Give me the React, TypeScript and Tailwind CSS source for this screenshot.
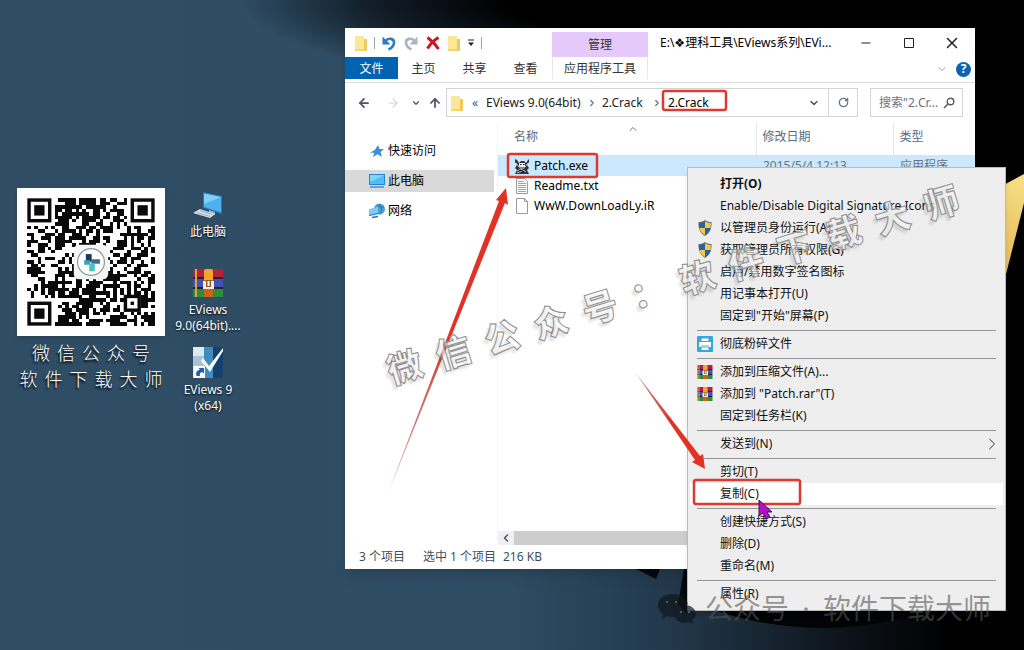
import { Fragment } from 'react';
import type { ReactNode } from 'react';
import {
    ArrowLeft,
    ArrowRight,
    ArrowUp,
    ChevronDown,
    ChevronLeft,
    ChevronRight,
    ChevronUp,
    Minus,
    RotateCw,
    Square,
    X,
} from 'lucide-react';

/* ---------- icons ---------- */

function FolderIcon() {
    return (
        <svg viewBox="0 0 14 18" className="w-[14px] h-[18px] shrink-0" aria-hidden="true">
            <path d="M1 2h9v3h3v12H1z" fill="#f5d571" />
            <path d="M1 2h9v13H1z" fill="#fce697" />
            <path d="M10 5h3v12h-3z" fill="#eec95c" />
        </svg>
    );
}

function UndoIcon({ color, flip }: { color: string; flip?: boolean }) {
    return (
        <svg viewBox="0 0 16 16" className={flip ? 'w-4 h-4 -scale-x-100' : 'w-4 h-4'} aria-hidden="true">
            <path d="M4 6.500C7.500 2 13.500 3.500 13 8c-.4 2.800-2.300 5-5.500 6.500" fill="none" stroke={color} strokeWidth="2.600" />
            <path d="M1.500 1.500v8h8z" fill={color} />
        </svg>
    );
}

function DeleteIcon() {
    return (
        <svg viewBox="0 0 16 16" className="w-4 h-4" aria-hidden="true">
            <path d="M2.500 2.500C6 5 11 10 13.500 14M13.500 2.500C9 5 5 9.500 2.500 13.500" fill="none" stroke="#c8141e" strokeWidth="3" />
        </svg>
    );
}

function MagnifierIcon() {
    return (
        <svg viewBox="0 0 12 12" className="w-3 h-3 shrink-0" aria-hidden="true">
            <circle cx="7.500" cy="4.500" r="3.300" fill="none" stroke="#5c5c5c" strokeWidth="1.400" />
            <path d="M5 7L1 11" stroke="#5c5c5c" strokeWidth="1.600" />
        </svg>
    );
}

function MonitorIcon({ className }: { className: string }) {
    return (
        <svg viewBox="0 0 16 16" className={className} aria-hidden="true">
            <path d="M0 1h16v11H0z" fill="#1f86d1" />
            <path d="M1 2h14v9H1z" fill="#55bdf5" />
            <path d="M1 2h14L1 9z" fill="#84d4fb" />
            <path d="M1 14h14" stroke="#3f89bb" strokeWidth="1.400" />
        </svg>
    );
}

function StarIcon() {
    return (
        <svg viewBox="0 0 16 16" className="w-4 h-4 shrink-0" aria-hidden="true">
            <path d="M9 2l1.500 4H15l-3.500 3 1.500 5-4.500-2.800L4 14l1.300-4.300H1l5-3z" fill="#3a8fd6" />
        </svg>
    );
}

function NetworkIcon() {
    return (
        <svg viewBox="0 0 16 16" className="w-4 h-4 shrink-0" aria-hidden="true">
            <circle cx="10.500" cy="6" r="5.500" fill="#4aa0d8" />
            <path d="M8 2c2 2 4 2 7 2M10 1c3 3 3 7 1 10" fill="none" stroke="#246fa8" strokeWidth=".8" />
            <path d="M0 6l9-2v7l-9 2z" fill="#7ccdf5" />
            <path d="M0 13l9-2v-1l-9 2z" fill="#2575b5" />
            <path d="M3 14.500l6-1" stroke="#2575b5" strokeWidth="1.500" />
        </svg>
    );
}

function PatchIcon() {
    return (
        <svg viewBox="0 0 16 16" className="w-4 h-4 shrink-0" aria-hidden="true">
            <path d="M1 1l2 1 2 3 2-2h3l2 2 2-3 1-1v3l-2 3 2 3-2 2 2 4H1l2-4-2-2 2-3-2-3z" fill="#2d3439" />
            <path d="M5 5h6v3l-1 3H6L5 8z" fill="#e9eef2" />
            <path d="M6 6.500h1.500M9 6.500h1.500M7 9v2M9 9v2" stroke="#222" strokeWidth="1" />
            <path d="M2 5l3 4M14 5l-3 4M3 13l4-2 5 3M3 15l5-2" stroke="#dfe9f2" strokeWidth=".8" />
        </svg>
    );
}

function PageIcon({ lines }: { lines?: boolean }) {
    return (
        <svg viewBox="0 0 16 16" className="w-4 h-4 shrink-0" aria-hidden="true">
            <path d="M2.500.5h8l3 3v12h-11z" fill="#fff" stroke="#9a9a9a" />
            {lines ? (
                <path d="M4 3.500h6M4 5.500h8M4 7.500h8M4 9.500h8M4 11.500h8M4 13.500h8" stroke="#a0a0a0" />
            ) : (
                <path d="M10.500.5v3h3" fill="none" stroke="#9a9a9a" />
            )}
        </svg>
    );
}

function ShieldIcon() {
    return (
        <svg viewBox="0 0 16 16" className="w-4 h-4" aria-hidden="true">
            <path d="M8 0c2 1.500 4 2 6.500 2 .3 6-1 10.500-6.500 14C2.500 12.500 1.200 8 1.500 2 4 2 6 1.500 8 0z" fill="#667078" />
            <path d="M8 1.200V8H2.400C2.200 6.500 2.200 5 2.300 3 4.500 2.900 6.200 2.400 8 1.200z" fill="#2762a8" />
            <path d="M8 1.200V8h5.600c.2-1.500.2-3 .1-5-2.200-.1-3.900-.6-5.700-1.800z" fill="#f5c845" />
            <path d="M8 8H2.400C3 11 4.800 13.200 8 15z" fill="#f5c845" />
            <path d="M8 8h5.600C13 11 11.200 13.200 8 15z" fill="#2762a8" />
        </svg>
    );
}

function ShredIcon() {
    return (
        <svg viewBox="0 0 16 16" className="w-4 h-4" aria-hidden="true">
            <rect width="16" height="16" rx="1" fill="#35a7da" />
            <path d="M4.500 2.500h7V5h-7zM2 6h12v5H2zM4.500 11.500h7V14h-7z" fill="#fff" />
            <path d="M4 10h8" stroke="#35a7da" />
        </svg>
    );
}

function RarIcon({ className }: { className: string }) {
    return (
        <svg viewBox="0 0 32 30" className={className} aria-hidden="true">
            <path d="M1 1h30v8H1z" fill="#b5203a" />
            <path d="M1 11h30v8H1z" fill="#4053b5" />
            <path d="M1 21h30v8H1z" fill="#2b8e3c" />
            <path d="M1 9h30v2H1zM1 19h30v2H1z" fill="#27212f" />
            <path d="M3 1h2v28H3z" fill="#d9a441" />
            <path d="M12 1h9v28h-9z" fill="#c9641d" />
            <path d="M12 3l2-2h5l2 2v9h-9z" fill="#f4a52f" />
            <path d="M11 13h11v8H11z" fill="#f3ead8" />
            <path d="M14 12h5v7h-5z" fill="#8f5a27" />
            <path d="M15.500 13h2v5h-2z" fill="#fff" />
        </svg>
    );
}

function PcIcon() {
    return (
        <svg viewBox="0 0 32 30" className="w-8 h-[30px]" aria-hidden="true">
            <path d="M11 2l19 4v18l-19-6z" fill="#1e7cc4" />
            <path d="M12 3.500l17 3.600v15.400l-17-5.500z" fill="#4cb2f0" />
            <path d="M12 3.500l17 3.600L12 14z" fill="#7fcff8" />
            <path d="M17 20l6 2v3l-6-2z" fill="#9fb4c2" />
            <path d="M1 23l7-4 15 5-5 4z" fill="#d9e2e8" />
            <path d="M5 22.500l13 4M8 20.500l12 4" stroke="#8b9ba8" strokeWidth=".8" />
        </svg>
    );
}

function EviewsIcon() {
    return (
        <svg viewBox="0 0 32 32" className="w-8 h-8" aria-hidden="true">
            <path d="M1 1h11v31H1z" fill="#dfe8ef" />
            <path d="M1 10h11v10H1z" fill="#a9c4d8" />
            <path d="M12 1h9v31h-9z" fill="#3f8cc0" />
            <path d="M21 1h10v31H21z" fill="#16406f" />
            <path d="M11 12l6 8L31 2v3L18 26l-9-11z" fill="#fff" />
            <path d="M2 20h11v12H2z" fill="#fff" />
            <path d="M4.500 30c-1-4 .5-6 3.500-6l-1.500-2H12v5.500L10 26c-2 .500-2.500 2-2 4z" fill="#1f5fae" />
        </svg>
    );
}

/* ---------- QR code ---------- */

const QR_SIZE = 37;

function inFinder(x: number, y: number) {
    return (x < 8 && y < 8) || (x > 28 && y < 8) || (x < 8 && y > 28);
}

function qrPath() {
    let seed = 77231;
    let d = '';
    for (let y = 0; y < QR_SIZE; y++) {
        for (let x = 0; x < QR_SIZE; x++) {
            seed = (seed * 16807) % 2147483647;
            const dense = (x > 8 && x < 20 && y < 14) || (y > 22 && x > 9 && x < 18);
            const on = seed / 2147483647 < (dense ? 0.68 : 0.52);
            const inAlign = x > 27 && x < 33 && y > 27 && y < 33;
            const inLogo = x > 13 && x < 23 && y > 13 && y < 23;
            if (on && !inFinder(x, y) && !inAlign && !inLogo) {
                d += `M${x} ${y}h1v1h-1z`;
            }
        }
    }
    return d;
}

function QrCode() {
    const finders = [[0, 0], [30, 0], [0, 30]];
    return (
        <svg viewBox="-3 -3 43 43" role="img" aria-label="QR" className="w-[148px] h-[148px] bg-white shadow-md">
            <path d={qrPath()} fill="#0a0a0a" shapeRendering="crispEdges" />
            {finders.map(([x, y]) => (
                <g key={`${x}-${y}`}>
                    <rect x={x + 0.5} y={y + 0.5} width="6" height="6" fill="#fff" stroke="#0a0a0a" />
                    <rect x={x + 2} y={y + 2} width="3" height="3" fill="#0a0a0a" />
                </g>
            ))}
            <rect x="28.500" y="28.500" width="4" height="4" fill="#fff" stroke="#0a0a0a" />
            <rect x="30" y="30" width="1" height="1" fill="#0a0a0a" />
            <rect x="13.500" y="13.500" width="10" height="10" rx="1.500" fill="#f4f5f5" />
            <circle cx="18.500" cy="18.500" r="3.900" fill="#fff" stroke="#8d9a9e" strokeWidth=".35" />
            <path d="M17 16.200h1.700v2.300H17z" fill="#153d5c" />
            <path d="M16.500 18h1.800v1.300h-1.800z" fill="#3ba3b5" />
            <path d="M18.600 17.700h2.500v1.300h-2.500z" fill="#3c6f8d" />
            <path d="M18 19h1.600v2.200H18z" fill="#48c2c0" />
        </svg>
    );
}

/* ---------- desktop ---------- */

function Wallpaper() {
    return (
        <svg
            viewBox="0 0 1024 650"
            preserveAspectRatio="none"
            aria-hidden="true"
            className="absolute inset-0 w-full h-full"
        >
            <defs>
                <linearGradient id="base" x1="0" y1="0" x2="1" y2="0">
                    <stop offset="0" stopColor="#2f4d65" />
                    <stop offset=".5" stopColor="#2e4c63" />
                    <stop offset=".66" stopColor="#22384a" />
                    <stop offset=".83" stopColor="#0c1219" />
                    <stop offset=".93" stopColor="#000" />
                </linearGradient>
                <radialGradient id="top" gradientUnits="userSpaceOnUse" cx="0" cy="0" r="1" gradientTransform="translate(680 0) scale(440 90)">
                    <stop offset=".4" stopColor="#000" />
                    <stop offset=".7" stopColor="#0b1119" stopOpacity=".8" />
                    <stop offset="1" stopColor="#0b1119" stopOpacity="0" />
                </radialGradient>
                <linearGradient id="moon" x1="0" y1="0" x2="0" y2="1">
                    <stop offset="0" stopColor="#f7e084" />
                    <stop offset="1" stopColor="#e0ae50" />
                </linearGradient>
            </defs>
            <path d="M0 0h1024v650H0z" fill="url(#base)" />
            <path d="M0 0h700v200H0z" fill="url(#top)" />
            <path d="M640 0h384v400H640z" fill="#000" />
            <path d="M636 569h24l-4 10zM684 569h3v45l-9-10z" fill="#05080c" />
            <path d="M690 600h260c-60 32-170 42-260 0z" fill="#020304" />
            <path d="M1000 187l24-13v29l-24 95z" fill="url(#moon)" />
        </svg>
    );
}

function DesktopIcon({ icon, lines }: { icon: ReactNode; lines: string[] }) {
    return (
        <button
            type="button"
            className="flex w-20 flex-col items-center text-xs leading-4 text-white [text-shadow:0_1px_2px_#000]"
        >
            {icon}
            <span className="mt-1">
                {lines.map((line) => (
                    <span key={line} className="block">{line}</span>
                ))}
            </span>
        </button>
    );
}

function CaptionLine({ text }: { text: string }) {
    return (
        <p className="flex justify-center gap-[7px]">
            {text.split('').map((ch) => (
                <span key={ch}>{ch}</span>
            ))}
        </p>
    );
}

/* ---------- explorer window ---------- */

function ExplorerHeader() {
    return (
        <header className="flex h-[55px] border-b border-[#dadbdc] text-[#333]">
            <div className="flex w-[207px] flex-col">
                <div className="flex h-[29px] items-center gap-[6px] pl-[9px]">
                    <FolderIcon />
                    <span className="h-3 w-px bg-gray-400" />
                    <button type="button" aria-label="撤消"><UndoIcon color="#2d7dc4" /></button>
                    <button type="button" aria-label="恢复"><UndoIcon color="#a9b4bf" flip /></button>
                    <button type="button" aria-label="删除"><DeleteIcon /></button>
                    <FolderIcon />
                    <svg viewBox="0 0 8 8" className="w-2 h-2" aria-hidden="true">
                        <path d="M1 1h6" stroke="#222" />
                        <path d="M1 3.500h6L4 7z" fill="#222" />
                    </svg>
                    <span className="h-3 w-px bg-gray-400" />
                </div>
                <div className="flex h-[22px]">
                    <button type="button" className="w-[53px] bg-[#0063b1] pt-[2px] text-white">文件</button>
                    <button type="button" className="w-[51px] pt-[2px]">主页</button>
                    <button type="button" className="w-[51px] pt-[2px]">共享</button>
                    <button type="button" className="w-[51px] pt-[2px]">查看</button>
                </div>
            </div>
            <div className="flex w-24 flex-col pt-1">
                <div className="flex h-[25px] items-center justify-center bg-[#e6c9fb]">管理</div>
                <button type="button" className="h-[22px] border-x border-gray-200 pt-[2px]">应用程序工具</button>
            </div>
            <div className="flex flex-1 flex-col">
                <div className="flex h-[29px] items-center justify-between pl-3 pr-[2px]">
                    <h1 className="text-black">
                        E:\<span className="font-['DejaVu_Sans']">❖</span>理科工具\EViews系列\EVi...
                    </h1>
                    <div className="flex items-center text-[#222]">
                        <button type="button" aria-label="最小化" className="flex w-[43px] justify-center">
                            <Minus size={14} strokeWidth={2} />
                        </button>
                        <button type="button" aria-label="最大化" className="flex w-[43px] justify-center">
                            <svg viewBox="0 0 10 10" className="w-[10px] h-[10px]" aria-hidden="true">
                                <path d="M.5.5h9v9h-9z" fill="none" stroke="currentColor" />
                            </svg>
                        </button>
                        <button type="button" aria-label="关闭" className="flex w-[43px] justify-center">
                            <X size={18} strokeWidth={2} />
                        </button>
                    </div>
                </div>
                <div className="flex h-6 items-center justify-end gap-2 pr-1">
                    <ChevronDown size={12} className="text-gray-400" />
                    <button
                        type="button"
                        aria-label="帮助"
                        className="flex h-[15px] w-[15px] items-center justify-center rounded-full bg-[#0f62ac] font-bold text-white"
                    >
                        ?
                    </button>
                </div>
            </div>
        </header>
    );
}

function AddressRow() {
    return (
        <div className="flex items-center pr-3 pt-[5px] text-[#222]">
            <nav className="flex w-[101px] items-center gap-[7px] pl-3 text-gray-600">
                <button type="button" aria-label="后退"><ArrowLeft size={14} strokeWidth={3} /></button>
                <button type="button" aria-label="前进" className="pl-2"><ArrowRight size={14} className="text-gray-300" /></button>
                <button type="button" aria-label="历史" className="pl-1"><ChevronDown size={10} strokeWidth={3} /></button>
                <button type="button" aria-label="向上"><ArrowUp size={14} strokeWidth={3} /></button>
            </nav>
            <div className="flex h-[29px] flex-1 items-center border border-[#d4d4d4]">
                <div className="flex flex-1 items-center pl-[3px]">
                    <FolderIcon />
                    <span className="w-[22px] text-center text-gray-600">«</span>
                    <a href="#eviews" className="w-[96px]">EViews 9.0(64bit)</a>
                    <ChevronRight size={10} strokeWidth={3} className="mx-[5px] shrink-0 text-gray-500" />
                    <a href="#crack" className="w-[44px]">2.Crack</a>
                    <ChevronRight size={10} strokeWidth={3} className="mx-[6px] shrink-0 text-gray-500" />
                    <a href="#crack2" className="text-black">2.Crack</a>
                </div>
                <button type="button" aria-label="展开" className="px-2">
                    <ChevronDown size={12} strokeWidth={3} className="text-gray-600" />
                </button>
                <button
                    type="button"
                    aria-label="刷新"
                    className="flex h-full w-[29px] items-center justify-center border-l border-[#d4d4d4]"
                >
                    <RotateCw size={11} strokeWidth={3} className="text-gray-500" />
                </button>
            </div>
            <label className="ml-3 flex h-[29px] w-[93px] items-center border border-[#d4d4d4] pl-2 pr-[7px]">
                <input
                    type="text"
                    aria-label="搜索"
                    placeholder='搜索"2.Cr...'
                    className="w-full min-w-0 placeholder:text-gray-500 focus:outline-none"
                />
                <MagnifierIcon />
            </label>
        </div>
    );
}

function SideNav() {
    return (
        <nav className="flex w-[149px] flex-col gap-2 pt-[17px]">
            <a href="#quick" className="flex h-[22px] items-center gap-[3px] pl-6"><StarIcon />快速访问</a>
            <a href="#pc" className="flex h-[22px] items-center gap-[3px] bg-[#d9d9d9] pl-6">
                <MonitorIcon className="w-4 h-4 shrink-0" />此电脑
            </a>
            <a href="#net" className="flex h-[22px] items-center gap-[3px] pl-6"><NetworkIcon />网络</a>
        </nav>
    );
}

const files = [
    { name: 'Patch.exe', date: '2015/5/4 12:13', type: '应用程序', icon: <PatchIcon />, selected: true },
    { name: 'Readme.txt', date: '', type: '', icon: <PageIcon lines />, selected: false },
    { name: 'WwW.DownLoadLy.iR', date: '', type: '', icon: <PageIcon />, selected: false },
];

function FileList() {
    return (
        <div className="ml-[3px] flex min-w-0 flex-1 flex-col border-l border-gray-100">
            <div className="flex h-0 justify-center pr-[208px]">
                <ChevronUp size={12} className="shrink-0 text-gray-500" />
            </div>
            <table className="w-full table-fixed border-collapse text-left">
                <thead>
                    <tr className="h-8 text-[#5b6b80]">
                        <th className="w-[258px] pb-1 pl-4 pt-0 font-normal">名称</th>
                        <th className="w-[137px] border-l border-gray-200 pb-1 pl-[6px] pt-0 font-normal">修改日期</th>
                        <th className="border-l border-gray-200 pb-1 pl-[6px] pt-0 font-normal">类型</th>
                    </tr>
                </thead>
                <tbody>
                    {files.map((file) => (
                        <tr key={file.name} className={file.selected ? 'h-[21px] bg-[#cce8ff]' : 'h-5'}>
                            <td className="p-0 pl-4">
                                <span className="flex items-center gap-1">
                                    {file.icon}
                                    {file.name}
                                </span>
                            </td>
                            <td className="p-0 pl-[7px] text-gray-500">{file.date}</td>
                            <td className="p-0 pl-[7px] text-gray-500">{file.type}</td>
                        </tr>
                    ))}
                </tbody>
            </table>
            <div className="mt-auto flex h-[14px] bg-[#f0f0f0]">
                <button type="button" aria-label="向左滚动" className="flex w-4 items-center justify-center">
                    <ChevronLeft size={12} strokeWidth={3} className="text-gray-600" />
                </button>
                <div className="mr-4 flex-1 bg-[#cdcdcd]" />
            </div>
        </div>
    );
}

function ExplorerWindow() {
    return (
        <section className="absolute left-[345px] top-7 flex h-[541px] w-[630px] flex-col bg-white shadow-lg">
            <ExplorerHeader />
            <AddressRow />
            <div className="flex flex-1 pt-[6px]">
                <SideNav />
                <FileList />
            </div>
            <footer className="flex h-6 items-center pl-[14px] text-[#3c4f66]">
                <span className="w-16">3 个项目</span>
                <span className="w-20">选中 1 个项目</span>
                <span>216 KB</span>
            </footer>
        </section>
    );
}

/* ---------- context menu ---------- */

interface MenuEntry {
    label: string;
    icon?: ReactNode;
    bold?: boolean;
    active?: boolean;
    submenu?: boolean;
}

const menuGroups: MenuEntry[][] = [
    [
        { label: '打开(O)', bold: true },
        { label: 'Enable/Disable Digital Signature Icons' },
        { label: '以管理员身份运行(A)', icon: <ShieldIcon /> },
        { label: '获取管理员所有权限(G)', icon: <ShieldIcon /> },
        { label: '启用/禁用数字签名图标' },
        { label: '用记事本打开(U)' },
        { label: '固定到"开始"屏幕(P)' },
    ],
    [{ label: '彻底粉碎文件', icon: <ShredIcon /> }],
    [
        { label: '添加到压缩文件(A)...', icon: <RarIcon className="w-4 h-4" /> },
        { label: '添加到 "Patch.rar"(T)', icon: <RarIcon className="w-4 h-4" /> },
        { label: '固定到任务栏(K)' },
    ],
    [{ label: '发送到(N)', submenu: true }],
    [{ label: '剪切(T)' }, { label: '复制(C)', active: true }],
    [{ label: '创建快捷方式(S)' }, { label: '删除(D)' }, { label: '重命名(M)' }],
    [{ label: '属性(R)' }],
];

function MenuItem({ label, icon, bold, active, submenu }: MenuEntry) {
    return (
        <button
            type="button"
            role="menuitem"
            className={`flex h-[22px] w-full items-center text-left ${active ? 'bg-white' : ''} ${bold ? 'font-bold' : ''}`}
        >
            <span className="flex w-[30px] shrink-0 pl-[7px]">{icon}</span>
            <span className="flex-1">{label}</span>
            {submenu && <ChevronRight size={20} strokeWidth={1} className="mr-px" />}
        </button>
    );
}

function ContextMenu() {
    return (
        <div
            role="menu"
            className="absolute left-[687px] top-[167px] w-[319px] border border-[#bbb] bg-[#eee] px-[2px] py-[5px] text-[#111] shadow-md"
        >
            {menuGroups.map((group, i) => (
                <Fragment key={group[0].label}>
                    {i > 0 && (
                        <div role="separator" className="flex h-[6px] items-center px-[7px]">
                            <span className="h-px w-full bg-[#949494]" />
                        </div>
                    )}
                    {group.map((entry) => (
                        <MenuItem key={entry.label} {...entry} />
                    ))}
                </Fragment>
            ))}
        </div>
    );
}

/* ---------- overlays ---------- */

function Annotations() {
    return (
        <svg
            width="1024"
            height="650"
            viewBox="0 0 1024 650"
            aria-hidden="true"
            className="pointer-events-none absolute left-0 top-0"
        >
            <defs>
                <linearGradient id="tail1" gradientUnits="userSpaceOnUse" x1="389" y1="493" x2="450" y2="335">
                    <stop offset="0" stopColor="#9c3a36" stopOpacity=".4" />
                    <stop offset="1" stopColor="#e13226" />
                </linearGradient>
                <linearGradient id="tail2" gradientUnits="userSpaceOnUse" x1="636" y1="374" x2="670" y2="420">
                    <stop offset="0" stopColor="#9c3a36" stopOpacity=".5" />
                    <stop offset="1" stopColor="#e13226" />
                </linearGradient>
            </defs>
            <g fill="none" stroke="#dc3a30" strokeWidth="2.500">
                <rect x="663" y="91" width="63" height="19" rx="2" />
                <rect x="508" y="154" width="89" height="23" rx="2" />
                <rect x="694" y="480" width="106" height="24" rx="2" />
            </g>
            <path d="M388 493L499 201l-3-1 10-12 2 17-3-2z" fill="url(#tail1)" />
            <path d="M635 372L695 460l-3 2 13 7-2-15-3 2z" fill="url(#tail2)" />
            <path d="M759 500v16l4-3 3 6 4-2-3-5h5z" fill="#b012c8" stroke="#4b0a66" strokeWidth="1" />
        </svg>
    );
}

function DiagonalWatermark() {
    return (
        <div
            aria-hidden="true"
            className="pointer-events-none absolute left-[372px] top-[260px] flex w-[602px] -rotate-[17deg] justify-center gap-4 text-[35px] leading-[50px] font-black text-[#f6f6f6]/60 [-webkit-text-stroke:1px_#8f8f8f] [text-shadow:-4px_3px_2px_rgba(0,0,0,0.1)]"
        >
            {'微信公众号：软件下载大师'.split('').map((ch) => (
                <span key={ch}>{ch}</span>
            ))}
        </div>
    );
}

function AccountWatermark() {
    return (
        <div className="pointer-events-none absolute left-[657px] top-[588px] flex items-center gap-2 text-[28px] leading-10 text-[#555]/60">
            <svg viewBox="0 0 40 34" className="w-10 h-[34px]" aria-hidden="true">
                <path
                    d="M15 3C7 3 1 8 1 14c0 4 2 7 5 9l-1 5 5-3c3 1 5 1 7 1 0-8 6-13 14-13C29 7 23 3 15 3z"
                    fill="#10151b"
                    fillOpacity=".7"
                />
                <path
                    d="M28 14c-6 0-11 4-11 9s5 9 11 9l4-1 4 2-1-4c3-2 4-4 4-6 0-5-5-9-11-9z"
                    fill="#10151b"
                    fillOpacity=".7"
                />
                <path d="M9 11h2M18 11h2M23 21h2M31 21h2" stroke="#4d5b66" strokeWidth="2" />
            </svg>
            <p className="flex">
                <span>公众号</span>
                <span className="w-[34px] text-center">·</span>
                <span>软件下载大师</span>
            </p>
        </div>
    );
}

export default function App() {
    return (
        <main className="relative min-h-screen w-full overflow-hidden bg-[#2f4d65] font-['Noto_Sans','Noto_Sans_CJK_SC',sans-serif] text-xs">
            <Wallpaper />

            {/* Desktop items */}
            <div className="relative flex gap-[3px] pl-[17px] pt-[188px]">
                <div className="w-[148px]">
                    <QrCode />
                    <div className="mt-1 text-lg leading-[26px] font-light text-white [text-shadow:-1px_2px_2px_#000]">
                        <CaptionLine text="微信公众号" />
                        <CaptionLine text="软件下载大师" />
                    </div>
                </div>
                <div className="flex flex-col pt-[2px]">
                    <DesktopIcon icon={<PcIcon />} lines={['此电脑']} />
                    <div className="h-7" />
                    <DesktopIcon icon={<RarIcon className="w-8 h-[30px]" />} lines={['EViews', '9.0(64bit)....']} />
                    <div className="h-3" />
                    <DesktopIcon icon={<EviewsIcon />} lines={['EViews 9', '(x64)']} />
                </div>
            </div>

            <ExplorerWindow />
            <ContextMenu />
            <Annotations />
            <DiagonalWatermark />
            <AccountWatermark />
        </main>
    );
}
